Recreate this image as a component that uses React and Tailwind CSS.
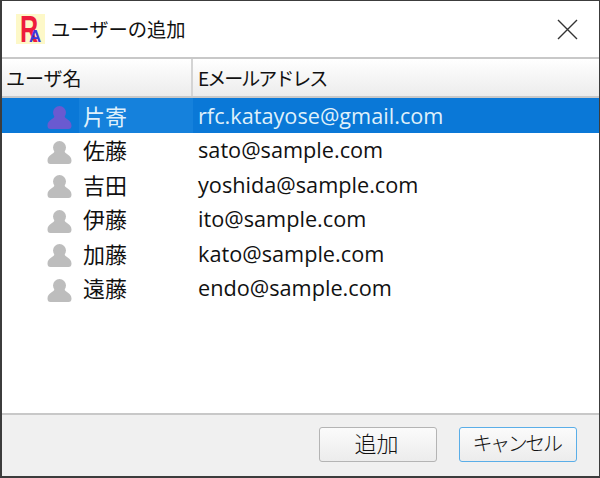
const F = { fontFamily: '"Noto Sans CJK JP", sans-serif' };
const E = { fontFamily: '"Open Sans", "Noto Sans CJK JP", sans-serif' };
const L = { fontFamily: '"Liberation Sans", sans-serif' };

const users = [
  ['片寄', 'rfc.katayose@gmail.com'],
  ['佐藤', 'sato@sample.com'],
  ['吉田', 'yoshida@sample.com'],
  ['伊藤', 'ito@sample.com'],
  ['加藤', 'kato@sample.com'],
  ['遠藤', 'endo@sample.com'],
];

function Person({ color }) {
  return (
    <svg width="25" height="23" viewBox="0 0 25 23" className="shrink-0 mt-[5px]">
      <ellipse cx="12.5" cy="6.5" rx="6.5" ry="6.5" fill={color} />
      <path d="M7.5 10 C7.5 13 0.5 13.5 0.5 19.5 C0.5 22 1.5 23 3.5 23 L21.5 23 C23.5 23 24.5 22 24.5 19.5 C24.5 13.5 17.5 13 17.5 10 Z" fill={color} />
    </svg>
  );
}

function Logo() {
  return (
    <div className="relative w-[29px] h-[30px] bg-[#fdf8c8] shrink-0">
      <span className="absolute left-[4px] top-[2px] h-[27px] text-[#ee1c3c] text-[37px] leading-[27px] font-bold origin-left scale-x-[0.68]" style={L}>R</span>
      <span className="absolute left-[13px] top-[17px] h-[11px] text-[#3a3ad8] text-[17px] leading-[11px] font-bold" style={L}>A</span>
    </div>
  );
}

export default function App() {
  return (
    <div className="w-[600px] h-[478px] flex flex-col bg-white border-t border-r border-b-2 border-l-2 border-[#3c3c3c] text-[#111] overflow-hidden" style={F}>
      <div className="h-[56px] shrink-0 flex items-center pl-[14px] pr-[21px] gap-[6px]">
        <Logo />
        <span className="text-[19.3px] leading-none pt-[2px]">ユーザーの追加</span>
        <svg width="21" height="21" viewBox="0 0 21 21" className="ml-auto" fill="none" stroke="#333" strokeWidth="1.4">
          <path d="M1 1 L20 20 M20 1 L1 20" />
        </svg>
      </div>
      <div className="h-[41px] shrink-0 flex border-t-2 border-b-2 border-[#c8c8c8] bg-gradient-to-b from-white to-[#ececec] text-[19px]">
        <div className="w-[191px] shrink-0 flex items-center pl-[4px] pt-[2px] border-r-2 border-[#d4d4d4]">ユーザ名</div>
        <div className="flex items-center pl-[5px] pt-[2px] tracking-[-2px]">Eメールアドレス</div>
      </div>
      <div className="flex-1 min-h-0">
        {users.map(([name, mail], i) => (
          <div key={mail} className={`h-[34.5px] flex items-center ${i === 0 ? 'bg-[#0a78d7] text-[#dff0fb]' : ''}`}>
            <div className="w-[191px] shrink-0 flex items-center h-full pl-[45px]">
              <Person color={i === 0 ? '#6a5ad0' : '#bdbdbd'} />
              <div className={`h-full flex items-center ml-[7px] pl-[4px] flex-1 text-[22px] ${i === 0 ? 'bg-[#1581dc]' : ''}`}>{name}</div>
            </div>
            <div className="pl-[5px] pt-[2px] text-[21.7px]" style={E}>{mail}</div>
          </div>
        ))}
      </div>
      <div className="h-[63px] shrink-0 flex items-center justify-end gap-[22px] pr-[22px] pb-[3px] bg-[#f0f0f0] border-t-2 border-[#c8c8c8]">
        <button className="w-[118px] h-[35px] flex items-center justify-center pb-[3px] pr-[3px] rounded-[3px] border border-[#b4b4b4] bg-gradient-to-b from-[#fbfbfb] to-[#ececec] text-[22px] font-light">追加</button>
        <button className="w-[118px] h-[35px] flex items-center justify-center pb-[3px] pr-[3px] rounded-[3px] border border-[#5aaee8] bg-gradient-to-b from-[#fbfbfb] to-[#ececec] text-[20px] font-light tracking-[-2.4px]">キャンセル</button>
      </div>
    </div>
  );
}
